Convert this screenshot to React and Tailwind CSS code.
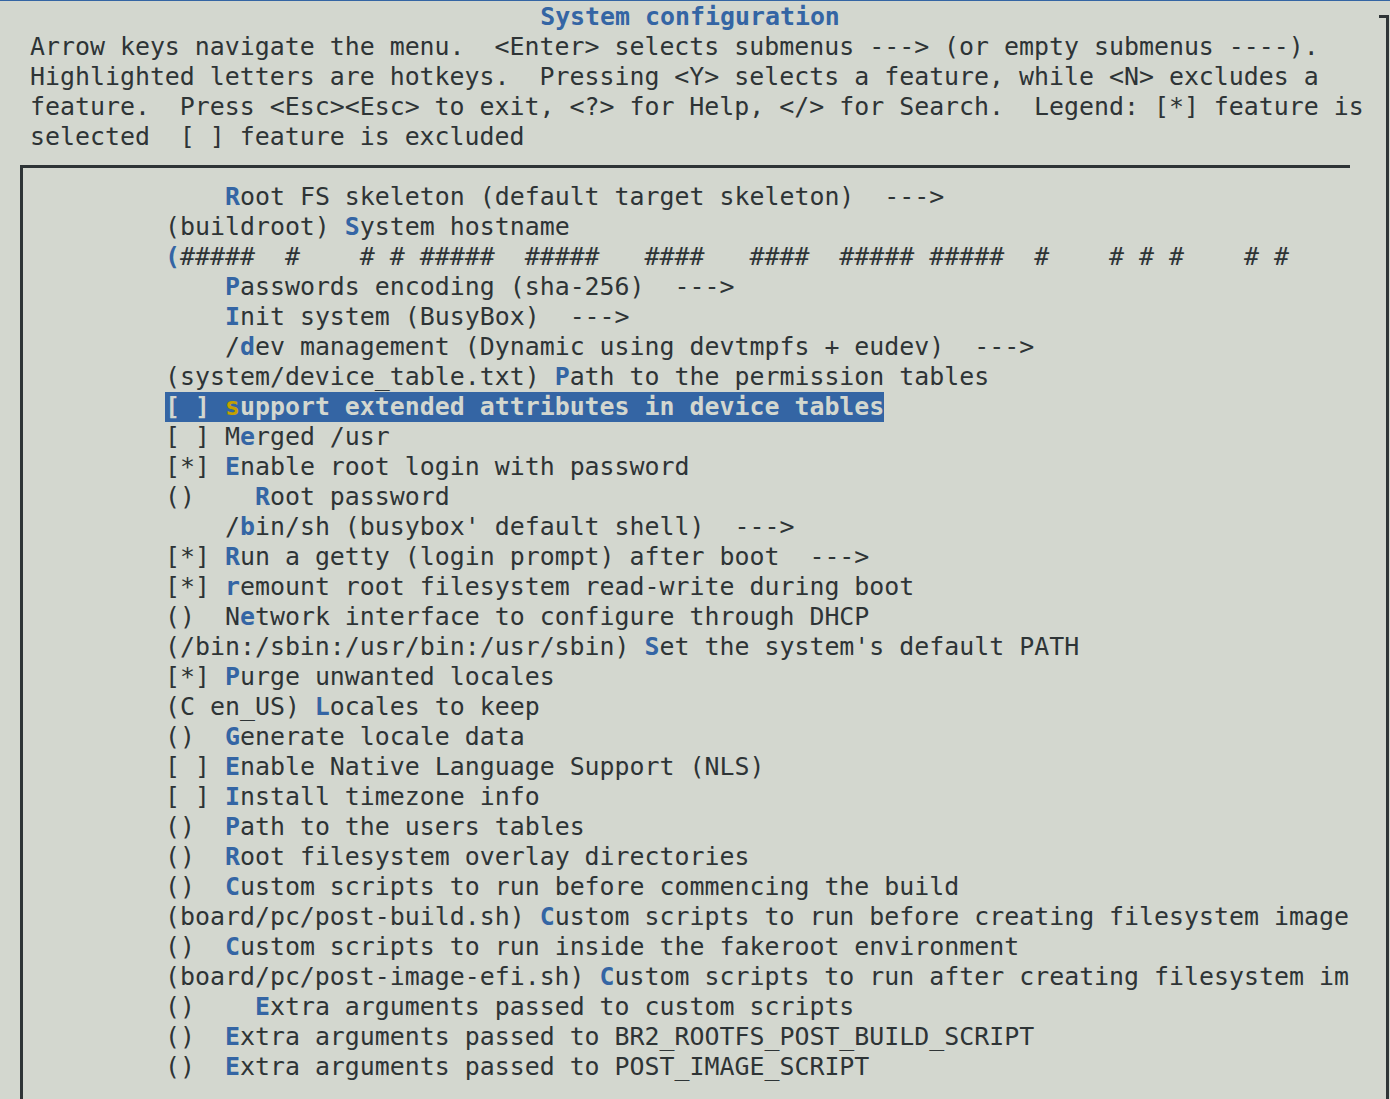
import React from "react";

// menuconfig "System configuration" screen, drawn on a 15px x 30px character grid
const header = [
  "Arrow keys navigate the menu.  <Enter> selects submenus ---> (or empty submenus ----).",
  "Highlighted letters are hotkeys.  Pressing <Y> selects a feature, while <N> excludes a",
  "feature.  Press <Esc><Esc> to exit, <?> for Help, </> for Search.  Legend: [*] feature is",
  "selected  [ ] feature is excluded",
];

// [text before hotkey, hotkey, text after, selected]
const items = [
  ["    ", "R", "oot FS skeleton (default target skeleton)  --->"],
  ["(buildroot) ", "S", "ystem hostname"],
  ["", "(", "#####  #    # # #####  #####   ####   ####  ##### #####  #    # # #    # #"],
  ["    ", "P", "asswords encoding (sha-256)  --->"],
  ["    ", "I", "nit system (BusyBox)  --->"],
  ["    /", "d", "ev management (Dynamic using devtmpfs + eudev)  --->"],
  ["(system/device_table.txt) ", "P", "ath to the permission tables"],
  ["[ ] ", "s", "upport extended attributes in device tables", true],
  ["[ ] M", "e", "rged /usr"],
  ["[*] ", "E", "nable root login with password"],
  ["()    ", "R", "oot password"],
  ["    /", "b", "in/sh (busybox' default shell)  --->"],
  ["[*] ", "R", "un a getty (login prompt) after boot  --->"],
  ["[*] ", "r", "emount root filesystem read-write during boot"],
  ["()  N", "e", "twork interface to configure through DHCP"],
  ["(/bin:/sbin:/usr/bin:/usr/sbin) ", "S", "et the system's default PATH"],
  ["[*] ", "P", "urge unwanted locales"],
  ["(C en_US) ", "L", "ocales to keep"],
  ["()  ", "G", "enerate locale data"],
  ["[ ] ", "E", "nable Native Language Support (NLS)"],
  ["[ ] ", "I", "nstall timezone info"],
  ["()  ", "P", "ath to the users tables"],
  ["()  ", "R", "oot filesystem overlay directories"],
  ["()  ", "C", "ustom scripts to run before commencing the build"],
  ["(board/pc/post-build.sh) ", "C", "ustom scripts to run before creating filesystem image"],
  ["()  ", "C", "ustom scripts to run inside the fakeroot environment"],
  ["(board/pc/post-image-efi.sh) ", "C", "ustom scripts to run after creating filesystem im"],
  ["()    ", "E", "xtra arguments passed to custom scripts"],
  ["()  ", "E", "xtra arguments passed to BR2_ROOTFS_POST_BUILD_SCRIPT"],
  ["()  ", "E", "xtra arguments passed to POST_IMAGE_SCRIPT"],
];

function MenuRow({ item }) {
  const [before, hotkey, after, selected] = item;
  if (selected) {
    return (
      <div className="h-[30px]">
        <span className="inline-block h-[30px] bg-[#3465a4] font-bold text-[#d3d7cf]">
          {before}
          <span className="text-[#c4a000]">{hotkey}</span>
          {after}
        </span>
      </div>
    );
  }
  return (
    <div className="h-[30px]">
      {before}
      <span className="font-bold text-[#3465a4]">{hotkey}</span>
      {after}
    </div>
  );
}

export default function App() {
  return (
    <div className="flex h-[1099px] w-[1390px] overflow-hidden border-t border-[#3465a4] bg-[#d3d7cf] font-['DejaVu_Sans_Mono',monospace] text-[24.9px] leading-[30px] whitespace-pre text-[#2e3436]">
      <div className="flex w-[1379px] flex-col pt-[1px]">
        <div className="h-[30px] w-[1380px] text-center font-bold text-[#3465a4]">
          System configuration
        </div>
        {header.map((line) => (
          <div key={line} className="h-[30px] pl-[30px]">
            {line}
          </div>
        ))}

        <div className="mt-[13px] ml-[20px] w-[1330px] flex-1 border-t-[3px] border-l-[3px] border-[#2e3436] pt-[14px] pl-[142px]">
          {items.map((item, i) => (
            <MenuRow key={i} item={item} />
          ))}
        </div>
      </div>

      <div className="mt-[14px] w-[10px] border-t-[3px] border-r-[3px] border-[#2e3436]" />
    </div>
  );
}
